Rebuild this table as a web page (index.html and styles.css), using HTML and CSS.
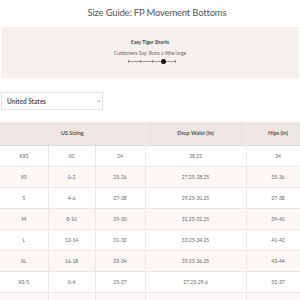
FILE: index.html
```html
<!DOCTYPE html>
<html lang="en">
<head>
    <meta charset="UTF-8">
    <meta name="viewport" content="width=device-width, initial-scale=1.0">
    <title>Size Guide</title>
    <link rel="stylesheet" href="styles.css">
</head>
<body>
    <div class="page">
        <h1 class="title">Size Guide: FP Movement Bottoms</h1>

        <div class="fit-panel">
            <p class="fit-name">Easy Tiger Shorts</p>
            <p class="fit-note">Customers Say: Runs a little large</p>
            <div class="fit-scale">
                <span class="tick"></span>
                <span class="tick"></span>
                <span class="tick"></span>
                <span class="tick"></span>
                <span class="tick"></span>
                <span class="dot"></span>
            </div>
        </div>

        <div class="country">
            <select class="country-select">
                <option>United States</option>
            </select>
            <svg class="chevron" width="4" height="3" viewBox="0 0 4 3">
                <path d="M0.5 0.5 L2 2 L3.5 0.5" fill="none" stroke="#777" stroke-width="0.7"/>
            </svg>
        </div>

        <div class="table-wrap">
            <table class="size-table">
                <colgroup>
                    <col style="width: 48px">
                    <col style="width: 47px">
                    <col style="width: 50px">
                    <col style="width: 101px">
                    <col style="width: 64px">
                </colgroup>
                <thead>
                    <tr>
                        <th colspan="3">US Sizing</th>
                        <th>Drop Waist (in)</th>
                        <th>Hips (in)</th>
                    </tr>
                </thead>
                <tbody>
                    <tr><td>XXS</td><td>00</td><td>24</td><td>28.25</td><td>34</td></tr>
                    <tr><td>XS</td><td>0-2</td><td>25-26</td><td>27.25-28.25</td><td>35-36</td></tr>
                    <tr><td>S</td><td>4-6</td><td>27-28</td><td>29.25-30.25</td><td>37-38</td></tr>
                    <tr><td>M</td><td>8-10</td><td>29-30</td><td>31.25-32.25</td><td>39-40</td></tr>
                    <tr><td>L</td><td>12-14</td><td>31-32</td><td>33.25-34.25</td><td>41-42</td></tr>
                    <tr><td>XL</td><td>16-18</td><td>33-34</td><td>35.25-36.25</td><td>43-44</td></tr>
                    <tr><td>XS/S</td><td>0-4</td><td>25-27</td><td>27.25-29.6</td><td>35-37</td></tr>
                    <tr><td></td><td></td><td></td><td></td><td></td></tr>
                </tbody>
            </table>
        </div>
    </div>
</body>
</html>
```
FILE: styles.css
```css
* {
    margin: 0;
    padding: 0;
    box-sizing: border-box;
}

body {
    background: white;
    font-family: 'Lato', 'Open Sans', sans-serif;
    color: #555;
    overflow: hidden;
}

.page {
    width: 300px;
}

.title {
    font-family: 'Lato', sans-serif;
    font-weight: 400;
    font-size: 9.5px;
    letter-spacing: -0.2px;
    color: #555;
    text-align: center;
    height: 27px;
    line-height: 25px;
    padding-left: 14px;
}

.fit-panel {
    margin: 0 1px;
    height: 51px;
    background: #f7f1ed;
    text-align: center;
    padding-top: 12px;
}

.fit-name {
    font-size: 5px;
    font-weight: bold;
    color: #444;
    line-height: 6px;
}

.fit-note {
    font-size: 5px;
    color: #666;
    line-height: 6px;
    margin-top: 5px;
}

.fit-scale {
    position: relative;
    width: 48px;
    height: 5px;
    margin: 3px auto 0;
    left: 2px;
    display: flex;
    justify-content: space-between;
    align-items: center;
}

.fit-scale::before {
    content: '';
    position: absolute;
    left: 0;
    right: 0;
    top: 2px;
    height: 1px;
    background: #999;
}

.tick {
    width: 1px;
    height: 3px;
    background: #888;
}

.dot {
    position: absolute;
    left: 33px;
    top: 0;
    width: 5px;
    height: 5px;
    border-radius: 50%;
    background: #111;
}

.country {
    position: relative;
    width: 102px;
    height: 18px;
    margin: 14px 0 0 1px;
}

.country-select {
    appearance: none;
    -webkit-appearance: none;
    display: block;
    width: 100%;
    height: 18px;
    border: 1px solid #e6e2df;
    border-radius: 0;
    background: white;
    font-family: 'Lato', sans-serif;
    font-size: 6.5px;
    font-weight: bold;
    color: #555;
    padding-left: 5px;
    outline: none;
}

.chevron {
    position: absolute;
    right: 2px;
    top: 8px;
}

.table-wrap {
    margin-top: 12px;
    width: 300px;
    overflow: hidden;
}

.size-table {
    width: 310px;
    table-layout: fixed;
    border-collapse: collapse;
    font-size: 5px;
}

.size-table th {
    background: #ede6e2;
    height: 23px;
    font-size: 5.5px;
    font-weight: bold;
    color: #555;
    border-right: 1px solid #f6f1ee;
    border-bottom: 1px solid #e2dcd8;
}

.size-table td {
    height: 21px;
    text-align: center;
    color: #666;
    border-right: 1px solid #eceae8;
    border-bottom: 1px solid #e9e6e4;
}

.size-table tbody tr:nth-child(even) td {
    background: #fdf8f6;
}
```
